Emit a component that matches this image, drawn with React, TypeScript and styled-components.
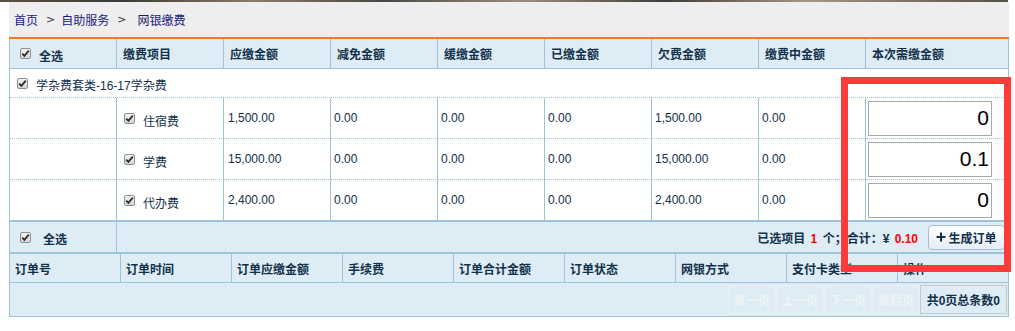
import styled, { createGlobalStyle } from 'styled-components';

const LINE = '#9cc4d6';
const HEAD_BG = '#deedf5';
const TEXT = '#12304a';

const GlobalStyle = createGlobalStyle`
	body {
		margin: 0;
		background: #fff;
		font-family: "Liberation Sans", "Noto Sans CJK SC", sans-serif;
		font-size: 12px;
		color: ${TEXT};
	}
`;

const Page = styled.div`
	position: relative;
	width: 1015px;
	height: 331px;
	overflow: hidden;
`;

const Strip = styled.div`
	width: 1008px;
	height: 2px;
	background: linear-gradient(
		90deg,
		#5d5247 0%,
		#3b3935 12%,
		#8b7b68 25%,
		#4a4843 38%,
		#9a8d7d 52%,
		#3f3c38 66%,
		#a89683 80%,
		#55504a 100%
	);
`;

const Main = styled.div`
	margin-left: 9px;
	width: 1000px;
`;

const Crumbs = styled.div`
	height: 35px;
	background: #eeeeee;
	border-bottom: 2px solid #f47920;
	display: flex;
	align-items: center;
	padding-left: 5px;
	color: #1a1a80;
	font-size: 12px;
`;

const Sep = styled.span<{ $after?: number }>`
	margin: 0 ${(p) => p.$after ?? 6}px 0 8px;
	color: #333;
	font-family: "DejaVu Sans", sans-serif;
	font-size: 11px;
`;

const FeeGrid = styled.div`
	display: grid;
	grid-template-columns: repeat(8, 107px) 1fr;
	border-left: 1px solid ${LINE};
	border-right: 1px solid ${LINE};
	border-bottom: 1px solid ${LINE};
`;

const Cell = styled.div<{
	$h: number;
	$bottom?: 'solid' | 'dotted' | 'none';
	$last?: boolean;
	$span?: number;
	$head?: boolean;
	$pad?: number;
}>`
	box-sizing: border-box;
	height: ${(p) => p.$h}px;
	grid-column: span ${(p) => p.$span ?? 1};
	display: flex;
	align-items: center;
	padding-left: ${(p) => p.$pad ?? 4}px;
	border-right: ${(p) => (p.$last ? 'none' : `1px solid ${LINE}`)};
	border-bottom: ${(p) => (p.$bottom === 'none' ? 'none' : `1px ${p.$bottom ?? 'solid'} ${LINE}`)};
	background: ${(p) => (p.$head ? HEAD_BG : '#fff')};
	font-weight: ${(p) => (p.$head ? 'bold' : 'normal')};
	white-space: nowrap;
	min-width: 0;
`;

const Check = styled.span`
	box-sizing: border-box;
	width: 11px;
	height: 11px;
	border: 1px solid #8e8f8f;
	border-radius: 2px;
	background: linear-gradient(#f4f4f4, #d6d6d6);
	display: inline-flex;
	align-items: center;
	justify-content: center;
	flex: none;
	margin-right: 8px;
`;

const CheckBox = () => (
	<Check>
		<svg width="9" height="9" viewBox="0 0 9 9">
			<path d="M1.2 4.6 L3.4 6.9 L7.8 1.6" fill="none" stroke="#2e2e2e" strokeWidth="1.8" />
		</svg>
	</Check>
);

const Label = styled.span<{ $drop?: number }>`
	position: relative;
	top: ${(p) => p.$drop ?? 0}px;
`;

const AmountInput = styled.input`
	box-sizing: border-box;
	width: 124px;
	height: 35px;
	border: 1px solid #a9a9a9;
	padding: 0 2px 0 0;
	text-align: right;
	font-family: "Liberation Sans", sans-serif;
	font-size: 21px;
	color: #000;
	background: #fff;
	outline: none;
`;

const Footer = styled.div`
	display: grid;
	grid-template-columns: 107px 1fr;
	border: 1px solid ${LINE};
	border-top: none;
	background: ${HEAD_BG};
`;

const FooterCell = styled.div<{ $first?: boolean }>`
	box-sizing: border-box;
	height: 30px;
	display: flex;
	align-items: center;
	justify-content: ${(p) => (p.$first ? 'flex-start' : 'flex-end')};
	padding: ${(p) => (p.$first ? '0 0 0 10px' : '0 3px 0 0')};
	border-right: ${(p) => (p.$first ? `1px solid ${LINE}` : 'none')};
	font-weight: bold;
	gap: 4px;
`;

const Red = styled.span`
	color: #f00;
	font-weight: bold;
	margin: 0 2px;
`;

const OrderButton = styled.button`
	box-sizing: border-box;
	height: 25px;
	width: 77px;
	margin-left: 4px;
	border: 1px solid #a6bfce;
	border-radius: 4px;
	background: linear-gradient(#ffffff, #e4eef4);
	font-family: inherit;
	font-size: 12px;
	font-weight: bold;
	color: ${TEXT};
	display: flex;
	align-items: center;
	justify-content: center;
	padding: 0;
	gap: 2px;
`;

const OrderGrid = styled.div`
	display: grid;
	grid-template-columns: repeat(8, 111px) 1fr;
	border: 1px solid ${LINE};
	border-top-width: 2px;
	border-top-color: ${LINE};
	background: ${HEAD_BG};
	margin-top: -1px;
`;

const OrderHead = styled.div<{ $last?: boolean }>`
	box-sizing: border-box;
	height: 29px;
	display: flex;
	align-items: center;
	padding-left: 5px;
	border-right: ${(p) => (p.$last ? 'none' : `1px solid ${LINE}`)};
	border-bottom: 1px solid ${LINE};
	font-weight: bold;
`;

const Pager = styled.div`
	grid-column: 1 / -1;
	height: 33px;
	display: flex;
	align-items: center;
	justify-content: flex-end;
	padding-right: 1px;
`;

const PageBtn = styled.span<{ $off?: boolean }>`
	box-sizing: border-box;
	height: 29px;
	min-width: 48px;
	padding: 0 ${(p) => (p.$off ? 0 : 6)}px;
	display: flex;
	align-items: center;
	justify-content: center;
	font-weight: bold;
	border: 1px solid ${(p) => (p.$off ? '#e9f1f5' : '#c8c8c8')};
	color: ${(p) => (p.$off ? '#eef4f7' : TEXT)};
`;

const Mark = styled.div`
	position: absolute;
	left: 841px;
	top: 77px;
	width: 170px;
	height: 195px;
	box-sizing: border-box;
	border: 7px solid #fe3a3a;
	pointer-events: none;
`;

const heads = ['缴费项目', '应缴金额', '减免金额', '缓缴金额', '已缴金额', '欠费金额', '缴费中金额', '本次需缴金额'];

const items = [
	{ name: '住宿费', due: '1,500.00', owe: '1,500.00', pay: '0' },
	{ name: '学费', due: '15,000.00', owe: '15,000.00', pay: '0.1' },
	{ name: '代办费', due: '2,400.00', owe: '2,400.00', pay: '0' },
];

const orderHeads = ['订单号', '订单时间', '订单应缴金额', '手续费', '订单合计金额', '订单状态', '网银方式', '支付卡类型', '操作'];

export default function App() {
	return (
		<Page>
			<GlobalStyle />
			<Strip />
			<Main>
				<Crumbs>
					<span>首页</span>
					<Sep>&gt;</Sep>
					<span>自助服务</span>
					<Sep $after={11}>&gt;</Sep>
					<span>网银缴费</span>
				</Crumbs>

				<FeeGrid>
					<Cell $h={30} $head $pad={10}>
						<CheckBox />
						<Label $drop={2}>全选</Label>
					</Cell>
					{heads.map((h, i) => (
						<Cell key={h} $h={30} $head $pad={6} $last={i === heads.length - 1}>
							{h}
						</Cell>
					))}

					<Cell $h={29} $span={9} $last $bottom="dotted" $pad={7}>
						<CheckBox />
						<Label $drop={1}>学杂费套类-16-17学杂费</Label>
					</Cell>

					{items.map((it, r) => {
						const bottom = r === items.length - 1 ? 'solid' : 'dotted';
						return [
							<Cell key={`${r}a`} $h={41} $bottom={bottom} />,
							<Cell key={`${r}b`} $h={41} $bottom={bottom} $pad={7}>
								<CheckBox />
								<Label $drop={2}>{it.name}</Label>
							</Cell>,
							<Cell key={`${r}c`} $h={41} $bottom={bottom}>{it.due}</Cell>,
							<Cell key={`${r}d`} $h={41} $bottom={bottom} $pad={3}>0.00</Cell>,
							<Cell key={`${r}e`} $h={41} $bottom={bottom} $pad={3}>0.00</Cell>,
							<Cell key={`${r}f`} $h={41} $bottom={bottom} $pad={3}>0.00</Cell>,
							<Cell key={`${r}g`} $h={41} $bottom={bottom} $pad={3}>{it.owe}</Cell>,
							<Cell key={`${r}h`} $h={41} $bottom={bottom} $pad={3}>0.00</Cell>,
							<Cell key={`${r}i`} $h={41} $bottom={bottom} $pad={2} $last>
								<AmountInput defaultValue={it.pay} />
							</Cell>,
						];
					})}
				</FeeGrid>

				<Footer>
					<FooterCell $first>
						<CheckBox />
						<Label $drop={1}>全选</Label>
					</FooterCell>
					<FooterCell>
						<span>
							已选项目 <Red>1</Red> 个；合计：¥ <Red>0.10</Red>
						</span>
						<OrderButton>
							<svg width="10" height="10" viewBox="0 0 10 10">
								<path d="M5 0.5 V9.5 M0.5 5 H9.5" stroke={TEXT} strokeWidth="2" />
							</svg>
							生成订单
						</OrderButton>
					</FooterCell>
				</Footer>

				<OrderGrid>
					{orderHeads.map((h, i) => (
						<OrderHead key={h} $last={i === orderHeads.length - 1}>
							{h}
						</OrderHead>
					))}
					<Pager>
						<PageBtn $off>第一页</PageBtn>
						<PageBtn $off>上一页</PageBtn>
						<PageBtn $off>下一页</PageBtn>
						<PageBtn $off>最后页</PageBtn>
						<PageBtn>共0页总条数0</PageBtn>
					</Pager>
				</OrderGrid>
			</Main>
			<Mark />
		</Page>
	);
}
